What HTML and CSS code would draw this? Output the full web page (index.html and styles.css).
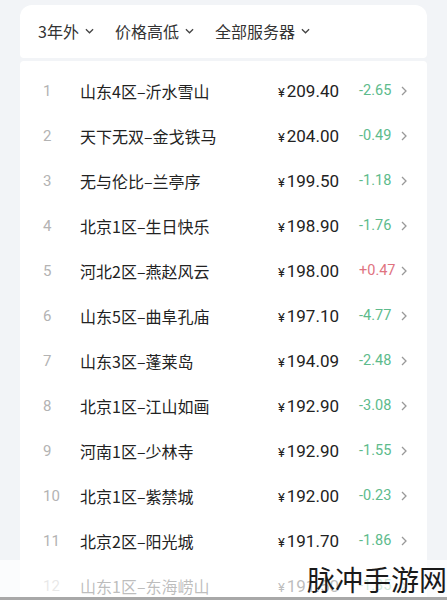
FILE: index.html
```html
<!DOCTYPE html>
<html lang="zh-CN">
<head>
    <meta charset="UTF-8">
    <meta name="viewport" content="width=device-width, initial-scale=1.0">
    <title>服务器价格</title>
    <link rel="stylesheet" href="styles.css">
</head>
<body>

    <div class="page">
        <div class="filter-bar">
            <div class="filter">3年外 <svg class="down" viewBox="0 0 10 6"><path d="M1 1l4 4 4-4"/></svg></div>
            <div class="filter">价格高低 <svg class="down" viewBox="0 0 10 6"><path d="M1 1l4 4 4-4"/></svg></div>
            <div class="filter">全部服务器 <svg class="down" viewBox="0 0 10 6"><path d="M1 1l4 4 4-4"/></svg></div>
        </div>

        <div class="list">
            <div class="row"><span class="num">1</span><span class="name">山东4区–沂水雪山</span><span class="price"><i>¥</i>209.40</span><span class="change down-c">-2.65</span><svg class="arrow" viewBox="0 0 6 10"><path d="M1 1l4 4-4 4"/></svg></div>
            <div class="row"><span class="num">2</span><span class="name">天下无双–金戈铁马</span><span class="price"><i>¥</i>204.00</span><span class="change down-c">-0.49</span><svg class="arrow" viewBox="0 0 6 10"><path d="M1 1l4 4-4 4"/></svg></div>
            <div class="row"><span class="num">3</span><span class="name">无与伦比–兰亭序</span><span class="price"><i>¥</i>199.50</span><span class="change down-c">-1.18</span><svg class="arrow" viewBox="0 0 6 10"><path d="M1 1l4 4-4 4"/></svg></div>
            <div class="row"><span class="num">4</span><span class="name">北京1区–生日快乐</span><span class="price"><i>¥</i>198.90</span><span class="change down-c">-1.76</span><svg class="arrow" viewBox="0 0 6 10"><path d="M1 1l4 4-4 4"/></svg></div>
            <div class="row"><span class="num">5</span><span class="name">河北2区–燕赵风云</span><span class="price"><i>¥</i>198.00</span><span class="change up-c">+0.47</span><svg class="arrow" viewBox="0 0 6 10"><path d="M1 1l4 4-4 4"/></svg></div>
            <div class="row"><span class="num">6</span><span class="name">山东5区–曲阜孔庙</span><span class="price"><i>¥</i>197.10</span><span class="change down-c">-4.77</span><svg class="arrow" viewBox="0 0 6 10"><path d="M1 1l4 4-4 4"/></svg></div>
            <div class="row"><span class="num">7</span><span class="name">山东3区–蓬莱岛</span><span class="price"><i>¥</i>194.09</span><span class="change down-c">-2.48</span><svg class="arrow" viewBox="0 0 6 10"><path d="M1 1l4 4-4 4"/></svg></div>
            <div class="row"><span class="num">8</span><span class="name">北京1区–江山如画</span><span class="price"><i>¥</i>192.90</span><span class="change down-c">-3.08</span><svg class="arrow" viewBox="0 0 6 10"><path d="M1 1l4 4-4 4"/></svg></div>
            <div class="row"><span class="num">9</span><span class="name">河南1区–少林寺</span><span class="price"><i>¥</i>192.90</span><span class="change down-c">-1.55</span><svg class="arrow" viewBox="0 0 6 10"><path d="M1 1l4 4-4 4"/></svg></div>
            <div class="row"><span class="num">10</span><span class="name">北京1区–紫禁城</span><span class="price"><i>¥</i>192.00</span><span class="change down-c">-0.23</span><svg class="arrow" viewBox="0 0 6 10"><path d="M1 1l4 4-4 4"/></svg></div>
            <div class="row"><span class="num">11</span><span class="name">北京2区–阳光城</span><span class="price"><i>¥</i>191.70</span><span class="change down-c">-1.86</span><svg class="arrow" viewBox="0 0 6 10"><path d="M1 1l4 4-4 4"/></svg></div>
            <div class="row"><span class="num">12</span><span class="name">山东1区–东海崂山</span><span class="price"><i>¥</i>191.50</span><span class="change down-c">-1.35</span><svg class="arrow" viewBox="0 0 6 10"><path d="M1 1l4 4-4 4"/></svg></div>
        </div>
    </div>

    <div class="fade"></div>
    <div class="watermark">脉冲手游网</div>

</body>
</html>
```

FILE: styles.css
```css
html, body {
    margin: 0;
    height: 600px;
    overflow: hidden;
}
body {
    font-family: "Noto Sans CJK SC", "Noto Sans", sans-serif;
    background-color: #f2f4f7;
    position: relative;
}
.page {
    padding: 5px 20px 0;
}
.filter-bar {
    display: flex;
    align-items: center;
    gap: 21px;
    height: 53px;
    padding-left: 18px;
    background-color: #fff;
    border-radius: 12px 12px 4px 4px;
    font-size: 16px;
    color: #333;
}
.filter {
    display: flex;
    align-items: center;
    gap: 6px;
    margin-top: -1px;
}
.down {
    width: 9px;
    height: 6px;
    fill: none;
    stroke: #444;
    stroke-width: 1.4;
}
.list {
    margin-top: 3px;
    padding-top: 7px;
    background-color: #fff;
    border-radius: 4px;
}
.row {
    display: flex;
    align-items: center;
    height: 45px;
    padding: 0 20px 0 23px;
}
.num {
    width: 37px;
    font-family: "Roboto", sans-serif;
    font-size: 15px;
    color: #b3b3b3;
}
.name {
    flex: 1;
    font-size: 16px;
    color: #222;
}
.price {
    font-family: "Roboto", sans-serif;
    font-size: 17px;
    color: #222;
}
.price i {
    font-style: normal;
    font-size: 13px;
    margin-right: 2px;
}
.change {
    width: 37px;
    margin-left: 20px;
    font-family: "Roboto", sans-serif;
    font-size: 14.5px;
}
.down-c {
    color: #5dbb8c;
}
.up-c {
    color: #e0737f;
}
.arrow {
    width: 6px;
    height: 10px;
    margin-left: 5px;
    fill: none;
    stroke: #999;
    stroke-width: 1.3;
}
.fade {
    position: absolute;
    left: 0;
    right: 0;
    top: 560px;
    height: 37px;
    background-color: rgba(255, 255, 255, 0.7);
    border-bottom: 3px solid #a8a8a8;
}
.watermark {
    position: absolute;
    right: 0;
    top: 562px;
    font-size: 28px;
    line-height: 34px;
    color: #1a1a1a;
}
```
